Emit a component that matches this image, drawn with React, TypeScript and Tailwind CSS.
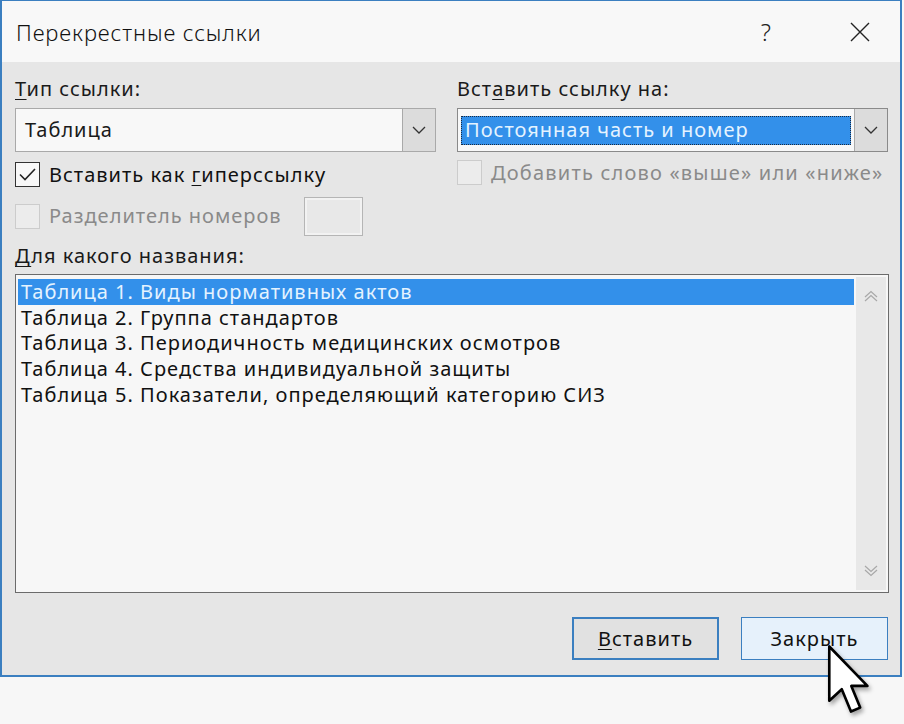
import React from 'react';

const font = "font-['Noto_Sans',_'Open_Sans',_sans-serif]";

const Chevron = ({ className = '' }: { className?: string }) => (
  <svg width="16" height="10" viewBox="0 0 16 10" className={className}>
    <path d="M2 2 L8 8 L14 2" fill="none" stroke="#333" strokeWidth="1.3" />
  </svg>
);

const U = ({ children }: { children: React.ReactNode }) => (
  <span className="underline underline-offset-[3px] decoration-1">{children}</span>
);

const Combo = ({ value, selected }: { value: string; selected?: boolean }) => (
  <div className={'flex h-[44px] border bg-[#f8f8f8] ' + (selected ? 'border-[#8a8a8a]' : 'border-[#a9a9a9]')}>
    <div className="flex-1 flex items-center px-[3px]">
      {selected ? (
        <div className="h-[29px] w-full bg-[#3390ea] border border-dotted border-[#1a2a40] flex items-center px-[3px] text-[#e4f3ff]">
          {value}
        </div>
      ) : (
        <span className="pl-[6px] text-[#1a1a1a]">{value}</span>
      )}
    </div>
    <div className="w-[33px] border-l border-[#a9a9a9] bg-[#dcdcdc] flex items-center justify-center">
      <Chevron />
    </div>
  </div>
);

const Check = ({ checked, disabled }: { checked?: boolean; disabled?: boolean }) => (
  <div
    className={
      'w-[25px] h-[25px] border flex items-center justify-center shrink-0 ' +
      (disabled ? 'border-[#cccccc] bg-[#ececec]' : 'border-[#333] bg-[#f8f8f8]')
    }
  >
    {checked && (
      <svg width="19" height="15" viewBox="0 0 19 15">
        <path d="M2 7.5 L7 12.5 L17 2" fill="none" stroke="#222" strokeWidth="1.6" />
      </svg>
    )}
  </div>
);

const ScrollArrow = ({ up }: { up?: boolean }) => (
  <svg width="16" height="12" viewBox="0 0 16 12">
    <path
      d={up ? 'M2 7 L8 1.5 L14 7 M2 11 L8 5.5 L14 11' : 'M2 1 L8 6.5 L14 1 M2 5 L8 10.5 L14 5'}
      fill="none"
      stroke="#a8a8a8"
      strokeWidth="1.2"
    />
  </svg>
);

const items = [
  'Таблица 1. Виды нормативных актов',
  'Таблица 2. Группа стандартов',
  'Таблица 3. Периодичность медицинских осмотров',
  'Таблица 4. Средства индивидуальной защиты',
  'Таблица 5. Показатели, определяющий категорию СИЗ',
];

export default function App() {
  return (
    <div className={`relative w-[904px] h-[724px] bg-[#f7f7f7] text-[20px] leading-[24px] tracking-[1px] ${font}`}>
      <div className="w-[902px] h-[677px] border-x-2 border-b-2 border-t border-[#3b7fc0] flex flex-col">
        {/* title bar */}
        <div className="h-[61px] bg-[#f8f8f8] flex items-center pl-[14px] pr-[30px]">
          <span className="text-[22px] font-light text-[#111] tracking-[0.9px]">Перекрестные ссылки</span>
          <div className="flex-1" />
          <span className="text-[24px] font-light text-[#222] mr-[78px]">?</span>
          <svg width="20" height="20" viewBox="0 0 20 20">
            <path d="M1 1 L19 19 M19 1 L1 19" stroke="#222" strokeWidth="1.4" />
          </svg>
        </div>

        {/* body */}
        <div className="flex-1 bg-[#e6e6e6] pl-[13px] pr-[9px] pt-[15px] flex flex-col">
          <div className="grid grid-cols-[421px_431px] gap-x-[21px]">
            <div className="flex flex-col">
              <div className="h-[24px] text-[#1a1a1a]">
                <U>Т</U>ип ссылки:
              </div>
              <div className="mt-[7px]">
                <Combo value="Таблица" />
              </div>
              <div className="mt-[10px] flex items-center gap-[9px] h-[25px] text-[#111]">
                <Check checked />
                <span>
                  Вставить как <U>г</U>иперссылку
                </span>
              </div>
              <div className="mt-[9px] flex items-center h-[40px]">
                <div className="flex items-center gap-[9px] text-[#8a8a8a] tracking-[1px]">
                  <Check disabled />
                  <span>Разделитель номеров</span>
                </div>
                <div className="ml-[22px] w-[59px] h-[39px] border border-[#b5b5b5] bg-[#e8e8e8] shadow-[inset_0_0_0_2px_#f2f2f2]" />
              </div>
            </div>
            <div className="flex flex-col">
              <div className="h-[24px] text-[#1a1a1a]">
                Вст<U>а</U>вить ссылку на:
              </div>
              <div className="mt-[7px]">
                <Combo value="Постоянная часть и номер" selected />
              </div>
              <div className="mt-[8px] flex items-center gap-[9px] h-[25px] text-[#8a8a8a] tracking-[1.2px]">
                <Check disabled />
                <span>Добавить слово «выше» или «ниже»</span>
              </div>
            </div>
          </div>

          <div className="mt-[8px] h-[24px] text-[#1a1a1a]">
            <U>Д</U>ля какого названия:
          </div>

          <div className="mt-[6px] w-[874px] h-[319px] border border-[#6b6b6b] bg-[#f7f7f7] flex p-[2px]">
            <div className="flex-1 pt-[2px] pr-[2px]">
              {items.map((t, i) => (
                <div
                  key={t}
                  className={
                    'h-[25.7px] flex items-center pl-[3px] ' +
                    (i === 0 ? 'bg-[#3390ea] text-[#e4f3ff]' : 'text-[#111]')
                  }
                >
                  {t}
                </div>
              ))}
            </div>
            <div className="w-[30px] bg-[#e8e8e8] flex flex-col items-center justify-between py-[13px]">
              <ScrollArrow up />
              <ScrollArrow />
            </div>
          </div>

          <div className="mt-[24px] flex justify-end gap-[22px] pr-[3px]">
            <button className="w-[147px] h-[43px] border-2 border-[#3b7fc0] bg-[#e1e1e1] text-[#111]">
              <U>В</U>ставить
            </button>
            <button className="w-[147px] h-[43px] border border-[#3b7fc0] bg-[#e6f1fb] text-[#111]">
              Закрыть
            </button>
          </div>
        </div>
      </div>

      {/* mouse cursor */}
      <svg
        className="absolute left-[826px] top-[642px] drop-shadow-[2px_3px_2px_rgba(0,0,0,0.35)]"
        width="46"
        height="78"
        viewBox="0 0 14 23"
      >
        <path
          d="M1 1 L1 17.5 L4.8 14 L7.6 20.8 L10.4 19.6 L7.7 13 L12.6 13 Z"
          fill="#fff"
          stroke="#000"
          strokeWidth="0.8"
          strokeLinejoin="round"
        />
      </svg>
    </div>
  );
}
